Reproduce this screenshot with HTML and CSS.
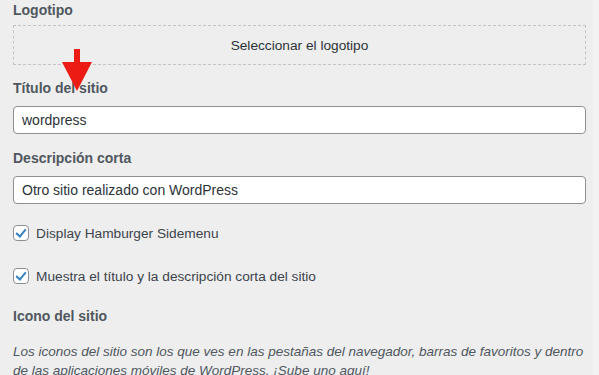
FILE: index.html
```html
<!DOCTYPE html>
<html lang="es">
<head>
    <meta charset="UTF-8">
    <meta name="viewport" content="width=device-width, initial-scale=1.0">
    <title>Identidad del sitio</title>
    <link rel="stylesheet" href="styles.css">
</head>
<body>
    <div class="panel">
        <div class="control">
            <span class="control-title">Logotipo</span>
            <button class="upload-button">Seleccionar el logotipo</button>
        </div>

        <div class="control control-title-field">
            <label class="control-title" for="blogname">Título del sitio</label>
            <input type="text" id="blogname" value="wordpress">
        </div>

        <div class="control control-desc">
            <label class="control-title" for="blogdescription">Descripción corta</label>
            <input type="text" id="blogdescription" value="Otro sitio realizado con WordPress">
        </div>

        <label class="check-row check-first">
            <input type="checkbox" checked>
            <span class="check-box"></span>
            Display Hamburger Sidemenu
        </label>

        <label class="check-row check-second">
            <input type="checkbox" checked>
            <span class="check-box"></span>
            Muestra el título y la descripción corta del sitio
        </label>

        <div class="control control-icon">
            <span class="control-title">Icono del sitio</span>
            <p class="description">Los iconos del sitio son los que ves en las pestañas del navegador, barras de favoritos y dentro de las aplicaciones móviles de WordPress. ¡Sube uno aquí!</p>
        </div>

        <!-- red annotation arrow over the screenshot -->
        <svg class="annotation" width="34" height="46" viewBox="0 0 34 46">
            <rect x="13" y="0" width="6" height="15" fill="#ec1c14"/>
            <polygon points="1,13 31,13 16,42" fill="#ec1c14"/>
        </svg>
    </div>
    <div class="scroll-strip"></div>
</body>
</html>
```

FILE: styles.css
```css
body {
    margin: 0;
    background-color: #eeeeef;
    font-family: "Liberation Sans", Arial, sans-serif;
    color: #2c3338;
    overflow: hidden;
}

.panel {
    position: relative;
    padding: 0 13px;
    height: 375px;
}

.scroll-strip {
    position: absolute;
    top: 0;
    right: 0;
    width: 6px;
    height: 375px;
    background-color: #f3f3f4;
}

.control-title {
    display: block;
    font-size: 14px;
    font-weight: bold;
    line-height: 21px;
    color: #50575e;
}

.upload-button {
    display: block;
    width: 100%;
    height: 40px;
    margin-top: 4px;
    background: transparent;
    border: 1px dashed #c3c4c7;
    font-family: inherit;
    font-size: 13.7px;
    color: #2c3338;
    cursor: pointer;
}

.control-title-field {
    margin-top: 13px;
}

.control-title-field input,
.control-desc input {
    display: block;
    box-sizing: border-box;
    width: 100%;
    height: 28px;
    margin-top: 7px;
    padding: 0 8px;
    border: 1px solid #8c8f94;
    border-radius: 4px;
    background-color: #fff;
    font-family: inherit;
    font-size: 14px;
    color: #2c3338;
}

.control-desc {
    margin-top: 14px;
}

.check-row {
    display: flex;
    align-items: center;
    gap: 7px;
    height: 16px;
    font-size: 13.7px;
    color: #3c434a;
}

.check-row input {
    display: none;
}

.check-box {
    position: relative;
    box-sizing: border-box;
    width: 16px;
    height: 16px;
    border: 1px solid #8c8f94;
    border-radius: 4px;
    background-color: #fff;
}

.check-box::after {
    content: "";
    position: absolute;
    left: 4px;
    top: 1px;
    width: 4px;
    height: 8px;
    border: solid #3582c4;
    border-width: 0 2.5px 2.5px 0;
    transform: rotate(40deg);
}

.check-first {
    margin-top: 21px;
}

.check-second {
    margin-top: 27px;
}

.control-icon {
    margin-top: 22px;
}

.description {
    margin: 15px 0 0;
    font-size: 13.5px;
    font-style: italic;
    line-height: 19px;
    color: #50575e;
}

.annotation {
    position: absolute;
    left: 61px;
    top: 49px;
}
```
